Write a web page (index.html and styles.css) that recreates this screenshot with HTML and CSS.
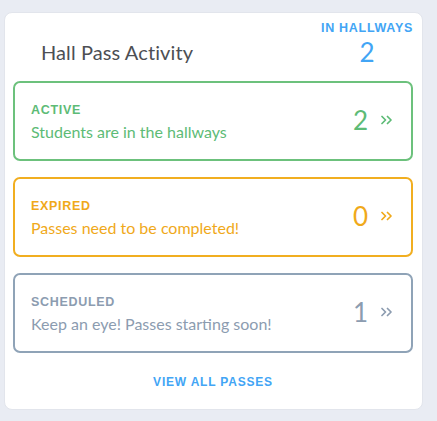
FILE: index.html
```html
<!DOCTYPE html>
<html>
<head>
<meta charset="utf-8">
<link rel="stylesheet" href="styles.css">
</head>
<body>
<div class="card">
  <div class="header">
    <h2 class="title">Hall Pass Activity</h2>
    <div class="hallways">
      <div class="hallways-label">IN HALLWAYS</div>
      <div class="hallways-count">2</div>
    </div>
  </div>
  <div class="list">
    <div class="status active">
      <div class="status-text">
        <div class="status-label">ACTIVE</div>
        <div class="status-desc">Students are in the hallways</div>
      </div>
      <div class="status-count">2</div>
      <svg class="status-chevron" viewBox="0 0 12 10" width="12" height="10"><path d="M1 1.5 L4.5 5 L1 8.5 M6.5 1.5 L10 5 L6.5 8.5" fill="none" stroke="currentColor" stroke-width="1.7" stroke-linecap="round" stroke-linejoin="round"/></svg>
    </div>
    <div class="status expired">
      <div class="status-text">
        <div class="status-label">EXPIRED</div>
        <div class="status-desc">Passes need to be completed!</div>
      </div>
      <div class="status-count">0</div>
      <svg class="status-chevron" viewBox="0 0 12 10" width="12" height="10"><path d="M1 1.5 L4.5 5 L1 8.5 M6.5 1.5 L10 5 L6.5 8.5" fill="none" stroke="currentColor" stroke-width="1.7" stroke-linecap="round" stroke-linejoin="round"/></svg>
    </div>
    <div class="status scheduled">
      <div class="status-text">
        <div class="status-label">SCHEDULED</div>
        <div class="status-desc">Keep an eye! Passes starting soon!</div>
      </div>
      <div class="status-count">1</div>
      <svg class="status-chevron" viewBox="0 0 12 10" width="12" height="10"><path d="M1 1.5 L4.5 5 L1 8.5 M6.5 1.5 L10 5 L6.5 8.5" fill="none" stroke="currentColor" stroke-width="1.7" stroke-linecap="round" stroke-linejoin="round"/></svg>
    </div>
  </div>
  <div class="footer"><a class="view-all">VIEW ALL PASSES</a></div>
</div>
</body>
</html>
```
FILE: styles.css
```css
html, body {
  margin: 0;
  padding: 0;
}
body {
  background: #e9ecf3;
  font-family: "Lato", "Liberation Sans", sans-serif;
  width: 437px;
  height: 421px;
  overflow: hidden;
}
.card {
  box-sizing: border-box;
  margin: 12px 0 0 4px;
  width: 419px;
  height: 398px;
  background: #ffffff;
  border: 1px solid #e2e5ec;
  border-radius: 8px;
  padding: 0 9px 0 8px;
  display: flex;
  flex-direction: column;
}
.header {
  height: 68px;
  display: flex;
  justify-content: space-between;
  align-items: flex-start;
}
.title {
  margin: 27px 0 0 28px;
  font-size: 20px;
  font-weight: 400;
  color: #4d4f54;
  letter-spacing: 0.1px;
}
.hallways {
  margin-top: 8px;
  display: flex;
  flex-direction: column;
  align-items: center;
}
.hallways-label {
  font-family: "Liberation Sans", sans-serif;
  font-weight: 700;
  font-size: 12.5px;
  letter-spacing: 0.7px;
  color: #42a5f5;
}
.hallways-count {
  font-size: 26px;
  line-height: 28px;
  color: #42a5f5;
  margin-top: 3px;
}
.list {
  display: flex;
  flex-direction: column;
  gap: 16px;
}
.status {
  box-sizing: border-box;
  height: 80px;
  border: 2px solid;
  border-radius: 7px;
  display: flex;
  align-items: center;
  padding: 0 18px 0 16px;
}
.status-text {
  flex: 1;
  display: flex;
  flex-direction: column;
  gap: 5px;
}
.status-label {
  font-family: "Liberation Sans", sans-serif;
  font-weight: 700;
  font-size: 12.5px;
  letter-spacing: 0.7px;
  margin-top: 2px;
}
.status-desc {
  font-size: 16px;
}
.status-count {
  font-size: 26px;
  margin-top: -2px;
}
.status-chevron {
  margin-left: 13px;
  margin-top: -2px;
}
.active { border-color: #6cc17c; color: #5dbb76; }
.expired { border-color: #f1ae20; color: #f0a91a; }
.scheduled { border-color: #8fa3b7; color: #8c9cb0; }
.footer {
  display: flex;
  justify-content: center;
  margin-top: 22px;
}
.view-all {
  font-family: "Liberation Sans", sans-serif;
  font-weight: 700;
  font-size: 12px;
  letter-spacing: 0.8px;
  color: #42a5f5;
}
```
